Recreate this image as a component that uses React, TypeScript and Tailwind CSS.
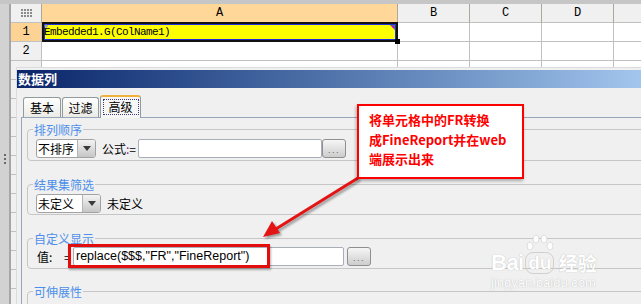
import React from 'react';

const cjk = "font-['Noto_Sans_CJK_SC','Liberation_Sans',sans-serif]";

function GridIcon() {
  const dots = [];
  for (let r = 0; r < 3; r++)
    for (let c = 0; c < 4; c++)
      dots.push(<rect key={`${r}-${c}`} x={c * 3} y={r * 3} width="2" height="2" fill="#8a8a8a" />);
  return (
    <svg width="11" height="8" viewBox="0 0 11 8">
      {dots}
    </svg>
  );
}

function Combo({ w, text }: { w: string; text: string }) {
  return (
    <div className={`${w} h-[19px] flex shrink-0 border border-[#a2a2a2] rounded-[3px] bg-white overflow-hidden`}>
      <div className="flex-1 text-[12px] leading-[17px] pl-[1px] text-black whitespace-nowrap overflow-hidden">{text}</div>
      <div className="w-[18px] border-l border-[#b4b4b4] bg-linear-to-b from-[#f4f4f4] to-[#c6c6c6] flex items-center justify-center">
        <svg width="8" height="5" viewBox="0 0 8 5">
          <polygon points="0,0 8,0 4,5" fill="#3a3a3a" />
        </svg>
      </div>
    </div>
  );
}

function DotsButton({ ml }: { ml: string }) {
  return (
    <div className={`${ml} w-[24px] h-[19px] shrink-0 rounded-[3px] border border-[#8f8f8f] bg-linear-to-b from-[#f6f6f6] to-[#cdcdcd] flex items-end justify-center pb-[2px]`}>
      <span className="text-[9px] leading-[9px] text-[#666] tracking-[1.5px] font-['Liberation_Sans',sans-serif]">...</span>
    </div>
  );
}

function Legend({ text }: { text: string }) {
  return (
    <span className="absolute left-[5px] top-[-6px] px-[1px] bg-[#f0f0f0] text-[12px] leading-[12px] text-[#4c8fea] whitespace-nowrap">
      {text}
    </span>
  );
}

export default function App() {
  const cols = ['A', 'B', 'C', 'D', ''];
  const widths = ['w-[356px]', 'w-[72px]', 'w-[72px]', 'w-[72px]', 'w-[72px]'];
  const rows = Array.from({ length: 15 }, (_, i) => i + 1);

  return (
    <div className={`relative w-[641px] h-[304px] overflow-hidden bg-[#f0f0f0] ${cjk}`}>
      {/* top bar */}
      <div className="h-[4px] bg-[#c6c6c6]" />
      {/* spreadsheet */}
      <div className="flex">
        <div className="w-[11px] shrink-0 bg-[#d2d2d2] border-r-[2px] border-[#a6a6a6] flex flex-col items-center pt-[150px] gap-[2px]">
          <div className="w-[2px] h-[2px] bg-[#6a6a6a]" />
          <div className="w-[2px] h-[2px] bg-[#6a6a6a]" />
          <div className="w-[2px] h-[2px] bg-[#6a6a6a]" />
        </div>
        <div className="flex flex-col">
          <div className="flex h-[19px]">
            <div className="w-[31px] shrink-0 bg-[#f0f0f0] border-r border-b border-r-[#aca899] border-b-[#c0c0c0] flex items-center justify-center">
              <GridIcon />
            </div>
            {cols.map((c, i) => (
              <div
                key={i}
                className={`${widths[i]} shrink-0 border-r border-b border-r-[#aca899] border-b-[#c0c0c0] flex items-center justify-center font-['Liberation_Mono',monospace] text-[12px] text-black ${i === 0 ? 'bg-[#ffd798]' : 'bg-[#f0f0f0]'}`}
              >
                {c}
              </div>
            ))}
          </div>
          {rows.map((r) => (
            <div key={r} className="flex h-[19px]">
              <div
                className={`w-[31px] shrink-0 border-r border-b border-[#c0c0c0] flex items-center justify-center font-['Liberation_Mono',monospace] text-[12px] text-black ${r === 1 ? 'bg-[#fcd395]' : 'bg-[#f0f0f0]'}`}
              >
                {r <= 2 ? r : ''}
              </div>
              {cols.map((c, i) =>
                r === 1 && i === 0 ? (
                  <div key={i} className={`${widths[i]} shrink-0 relative bg-[#ffff00] border-r border-b border-[#c0c0c0]`}>
                    <div className="absolute left-[0px] top-[-1px] right-[-1px] bottom-[-1px] border-2 border-[#111] shadow-[inset_0_0_0_1px_#2030d8]" />
                    <svg className="absolute left-[2px] top-[1px]" width="4" height="4" viewBox="0 0 4 4">
                      <path d="M2 0V4M0 2H4" stroke="#7a8ac0" strokeWidth="1" />
                    </svg>
                    <span className="absolute left-[2px] top-[2px] font-['Liberation_Mono',monospace] text-[11px] leading-[15px] tracking-[-0.6px] text-black">
                      Embedded1.G(ColName1)
                    </span>
                    <svg className="absolute right-[2px] top-[2px]" width="5" height="5" viewBox="0 0 5 5">
                      <polygon points="0,0 5,0 5,5" fill="#c000c0" />
                      <polyline points="0,0 5,0 5,5" fill="none" stroke="#30c030" strokeWidth="1" />
                    </svg>
                    <div className="absolute right-[-3px] bottom-[-3px] w-[5px] h-[5px] bg-black" />
                  </div>
                ) : (
                  <div key={i} className={`${widths[i]} shrink-0 bg-white border-r border-b border-[#c0c0c0]`} />
                )
              )}
            </div>
          ))}
        </div>
      </div>

      {/* dialog window */}
      <div className="absolute left-[16px] top-[67px] w-[640px] h-[260px] bg-[#f0f0f0] border-t border-l border-[#dcdcdc] pt-[2px] flex flex-col">
        <div className="h-[18px] bg-linear-to-r from-[#0a246a] to-[#a6caf0] flex items-center pl-[1px]">
          <span className="text-[13px] leading-[18px] font-bold text-white">数据列</span>
        </div>
        <div className="flex flex-col pt-[7px] flex-1">
          {/* tabs */}
          <div className="flex items-end h-[22px] pl-[6px] gap-[1px]">
            <div className="w-[38px] h-[20px] border border-b-0 border-[#919b9c] rounded-t-[3px] bg-linear-to-b from-white to-[#ebebe6] flex items-center justify-center text-[12px] leading-[12px] text-black">
              基本
            </div>
            <div className="w-[37px] h-[20px] border border-b-0 border-[#919b9c] rounded-t-[3px] bg-linear-to-b from-white to-[#ebebe6] flex items-center justify-center text-[12px] leading-[12px] text-black">
              过滤
            </div>
            <div className="relative z-10 w-[41px] h-[23px] -mb-[1px] border-x border-[#919b9c] border-t-[2px] border-t-[#f0b23c] rounded-t-[3px] bg-[#f6f6f6] flex items-start justify-center pt-[2px]">
              <div className="w-[36px] h-[16px] border border-dotted border-[#3c3c7c] flex items-center justify-center text-[12px] leading-[12px] text-black">
                高级
              </div>
            </div>
          </div>
          {/* panel */}
          <div className="ml-[4px] flex-1 border-t border-l border-[#97a5ba] pt-[11px] pl-[5px] flex flex-col">
            {/* 排列顺序 */}
            <div className="relative border border-[#c6c6c6] rounded-[4px] pt-[9px] pb-[2px] pl-[8px]">
              <Legend text="排列顺序" />
              <div className="flex items-center h-[19px]">
                <Combo w="w-[60px]" text="不排序" />
                <span className="ml-[6px] w-[36px] text-[12px] leading-[12px] text-black whitespace-nowrap">
                  公式<span className="text-[#6a2a8a]">:</span>=
                </span>
                <div className="w-[184px] h-[19px] shrink-0 bg-white border border-[#a9afb8] rounded-[2px]" />
                <DotsButton ml="ml-0" />
              </div>
            </div>
            {/* 结果集筛选 */}
            <div className="relative mt-[23px] border border-[#c6c6c6] rounded-[4px] pt-[9px] pb-[1px] pl-[8px]">
              <Legend text="结果集筛选" />
              <div className="flex items-center h-[19px]">
                <Combo w="w-[65px]" text="未定义" />
                <span className="ml-[6px] text-[12px] leading-[12px] text-black">未定义</span>
              </div>
            </div>
            {/* 自定义显示 */}
            <div className="relative mt-[23px] border border-[#c6c6c6] rounded-[4px] pt-[8px] pb-[2px] pl-[9px]">
              <Legend text="自定义显示" />
              <div className="flex items-center h-[19px]">
                <span className="w-[27px] text-[12px] leading-[12px] text-black">值:</span>
                <span className="w-[9px] text-[12px] leading-[12px] text-black">=</span>
                <div className="w-[271px] h-[19px] shrink-0 bg-white border border-[#a9afb8] rounded-[2px] flex items-center pl-[2px]">
                  <span className="font-['Liberation_Sans',sans-serif] text-[12.5px] leading-[15px] text-black whitespace-nowrap">
                    replace($$$,"FR","FineReport")
                  </span>
                </div>
                <DotsButton ml="ml-[3px]" />
              </div>
            </div>
            {/* 可伸展性 */}
            <div className="relative mt-[22px] h-[40px] border border-[#c6c6c6] rounded-[4px]">
              <Legend text="可伸展性" />
            </div>
          </div>
        </div>
      </div>

      {/* watermark */}
      <div className="absolute left-[491px] top-[234px] flex flex-col items-start text-white [text-shadow:0_0_1px_rgba(120,120,120,0.6)]">
        <div className="flex items-end h-[40px]">
          <span className="font-['Liberation_Sans',sans-serif] font-bold text-[22px] leading-[22px] tracking-[-0.5px]">Bai</span>
          <span className="relative flex flex-col items-center">
            <svg width="32" height="18" viewBox="0 0 32 18" className="opacity-90">
              <ellipse cx="6" cy="12" rx="3" ry="4" fill="#fff" stroke="#c8c8c8" strokeWidth="0.6" />
              <ellipse cx="12" cy="5" rx="3" ry="4" fill="#fff" stroke="#c8c8c8" strokeWidth="0.6" />
              <ellipse cx="20" cy="5" rx="3" ry="4" fill="#fff" stroke="#c8c8c8" strokeWidth="0.6" />
              <ellipse cx="26" cy="12" rx="3" ry="4" fill="#fff" stroke="#c8c8c8" strokeWidth="0.6" />
            </svg>
            <span className="font-['Liberation_Sans',sans-serif] font-bold text-[19px] leading-[20px] px-[2px] rounded-[8px] border border-[#d0d0d0]">du</span>
          </span>
          <span className="ml-[3px] font-bold text-[19px] leading-[22px]">经验</span>
        </div>
        <span className="mt-[2px] font-['Liberation_Sans',sans-serif] text-[13px] leading-[14px]">jingyan.baidu.com</span>
      </div>

      {/* red highlight box */}
      <div className="absolute left-[68px] top-[244px] w-[202px] h-[24px] border-[3px] border-[#e40d0d] shadow-[1px_2px_2px_rgba(0,0,0,0.3)]" />

      {/* arrow */}
      <svg className="absolute left-0 top-0 drop-shadow-[2px_2px_1px_rgba(0,0,0,0.35)]" width="641" height="304" viewBox="0 0 641 304">
        <line x1="358" y1="178" x2="275" y2="229.5" stroke="#e41414" strokeWidth="3" />
        <polygon points="263,237 280,233 272,221" fill="#e41414" />
      </svg>

      {/* callout */}
      <div className="absolute left-[357px] top-[104px] w-[167px] h-[75px] border-2 border-[#ff0000] bg-white shadow-[-1px_2px_3px_rgba(0,0,0,0.3)] pl-[10px] pt-[4px]">
        <p className="text-[13px] leading-[19.5px] font-bold text-[#ff0000] whitespace-nowrap">
          将单元格中的FR转换
          <br />
          成FineReport并在web
          <br />
          端展示出来
        </p>
      </div>
    </div>
  );
}
